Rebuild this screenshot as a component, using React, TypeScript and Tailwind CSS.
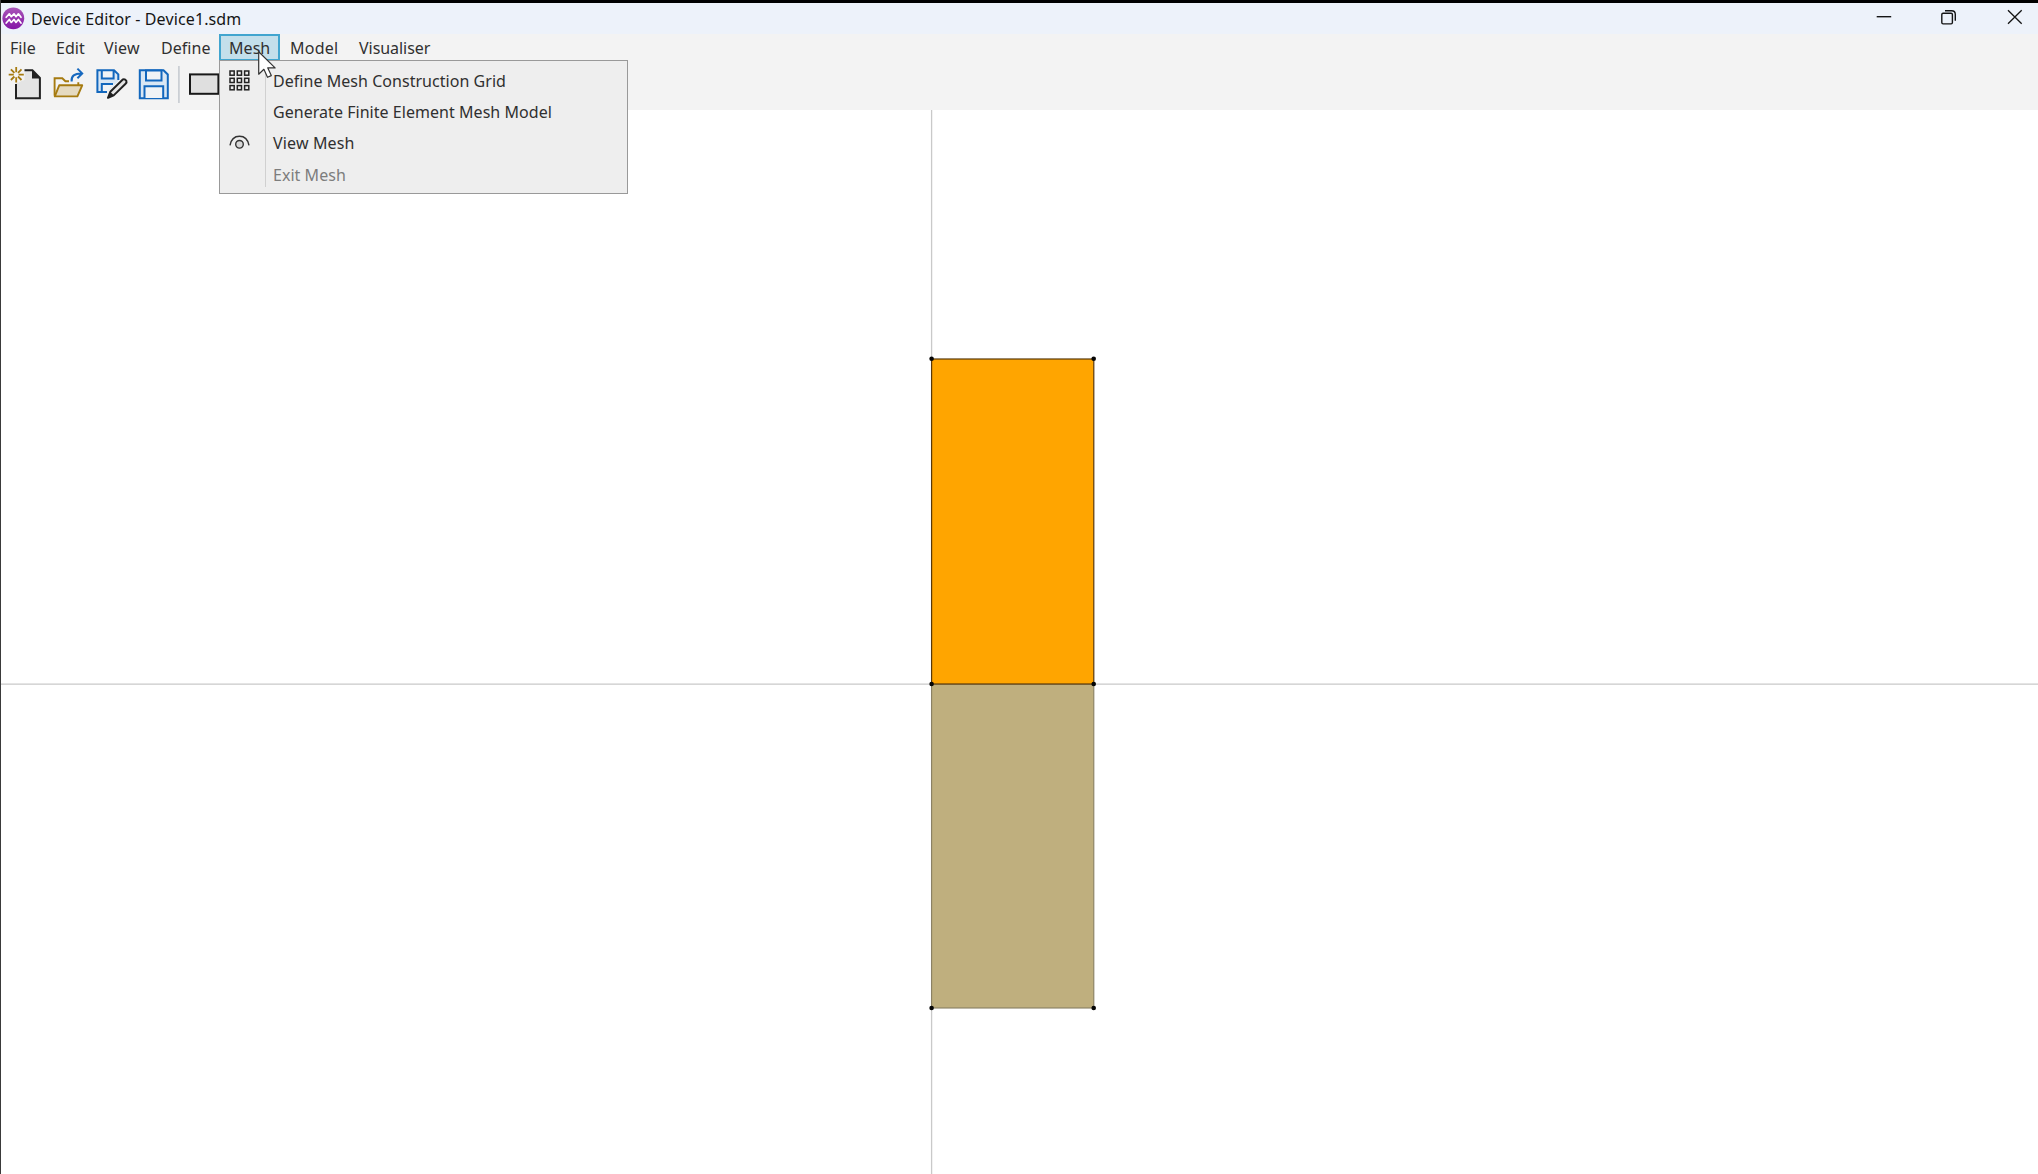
import React from "react";

const menus = [
  { label: "File", cls: "w-[45px] pl-[9px] tracking-[0.05px]" },
  { label: "Edit", cls: "w-[48px] pl-[10px] tracking-[0.05px]" },
  { label: "View", cls: "w-[57px] pl-[10px] tracking-[0.15px]" },
  { label: "Define", cls: "w-[68px] pl-[10px] tracking-[0.05px]" },
  { label: "Mesh", cls: "w-[61px] pl-[8px] tracking-[0.05px] border-2 border-[#41a5cf] bg-[#c3dfeb]" },
  { label: "Model", cls: "w-[68px] pl-[10px] tracking-[0.25px]" },
  { label: "Visualiser", cls: "w-[90px] pl-[11px] tracking-[-0.05px]" },
];

function AppLogo() {
  return (
    <svg width="23" height="23" viewBox="0 0 23 23" className="shrink-0">
      <defs>
        <linearGradient id="logo" x1="0" y1="0" x2="0" y2="1">
          <stop offset="0" stopColor="#a956b8" />
          <stop offset="1" stopColor="#8417a6" />
        </linearGradient>
      </defs>
      <circle cx="11.3" cy="11.3" r="10.9" fill="url(#logo)" />
      <path d="M4.2 10.3 7.3 6.8 9.3 9.7 12 6.8 14 9.7 16.4 6.8 19 10.3M4.2 16 7.3 12.5 9.3 15.4 12 12.5 14 15.4 16.4 12.5 19 16" fill="none" stroke="#fff" strokeWidth="1.7" strokeLinejoin="round" strokeLinecap="round" />
    </svg>
  );
}

function ToolbarIcons() {
  return (
    <svg width="218" height="48" viewBox="1 0 218 48" fill="none" className="shrink-0">
      {/* new document */}
      <path d="M16 21.5V37.3H39.9V17L32.4 9.2H24.5V19Z" fill="#e4e4e4" />
      <path d="M16 23V37.3H39.9V17L32.4 9.2H24.5" stroke="#222" strokeWidth="2" />
      <path d="M32 9V17.6H40Z" fill="#222" />
      <circle cx="16.2" cy="13.7" r="8.2" fill="#f3f3f3" />
      <path d="M16.2 6V11.2M16.2 16.2V21.4M8.7 13.7H13.8M18.6 13.7H23.8M10.9 8.4 14.4 11.9M21.5 8.4 18 11.9M10.9 19 14.4 15.5M21.5 19 18 15.5" stroke="#a67b10" strokeWidth="1.8" />
      {/* open */}
      <path d="M54.6 34.8V17.2H62.3L65.4 20.2H69M78.3 21.2V24" stroke="#a67b10" strokeWidth="1.9" />
      <path d="M54.8 35.4 59.2 24.3H82.2L77.4 35.4Z" fill="#e5dac0" stroke="#a67b10" strokeWidth="1.9" strokeLinejoin="round" />
      <path d="M71.6 20.5C71 15 74.5 12.3 81.6 12.4M77.4 7.6 82.2 12.4 77.4 17.2" stroke="#1769bf" strokeWidth="2" />
      {/* save as */}
      <path d="M97.4 9.2H114L118.3 13.4V20L107 31H97.4Z" fill="#d9e7f4" />
      <path d="M101.8 9.2H113.8V17.5H101.8ZM101.8 31V23H114L107 31Z" fill="#f0f3f6" />
      <path d="M107 31H97.4V9.2H114L118.3 13.4V19M101.8 9.2V17.5H113.6V9.2M101.8 31V23H113" stroke="#1267bd" strokeWidth="2" />
      <path d="M108 36.8 110.3 30.8 122.8 18.5Q125 17.8 126.3 19.7 127 21.5 125.6 22.7L113.7 34.4Z" fill="#e6e6e6" stroke="#222" strokeWidth="2" strokeLinejoin="round" />
      <path d="M107.6 37.2 110.2 30.8 113.9 34.3Z" fill="#222" />
      {/* save */}
      <path d="M139.8 9.2H163.5L167.8 13.5V37.2H139.8Z" fill="#d9e7f4" stroke="#1267bd" strokeWidth="2" />
      <path d="M146 9.5H161.5V19.4H146ZM144.5 37V25.3H163.2V37" fill="#f0f3f6" stroke="#1267bd" strokeWidth="2" />
      <path d="M178.9 5V42" stroke="#c3c8ce" strokeWidth="1.5" />
      {/* rectangle tool */}
      <rect x="190" y="13.4" width="28.4" height="19.4" fill="#dfdfdf" stroke="#181818" strokeWidth="2" />
    </svg>
  );
}

function WindowButtons() {
  return (
    <svg width="198" height="31" viewBox="0 0 198 31" fill="none" stroke="#151515" className="ml-auto shrink-0">
      <path d="M36.7 13.7H51.2" strokeWidth="1.4" />
      <rect x="101.8" y="10.3" width="10.6" height="10.6" rx="1.3" strokeWidth="1.4" />
      <path d="M105 7.7H111.6Q115.3 7.7 115.3 11.4V17.7" strokeWidth="1.4" />
      <path d="M168 7.2 181.7 20.8M181.7 7.2 168 20.8" strokeWidth="1.3" />
    </svg>
  );
}

function GridIcon() {
  return (
    <svg width="21" height="21" viewBox="0 0 21 21" fill="none" stroke="#222" strokeWidth="1.5">
      {[1, 8.3, 15.6].map((y) =>
        [1, 8.3, 15.6].map((x) => <rect key={`${x}-${y}`} x={x} y={y} width="4.2" height="4.2" />)
      )}
    </svg>
  );
}

function EyeIcon() {
  return (
    <svg width="21" height="21" viewBox="0 0 21 21" fill="none" stroke="#333" strokeWidth="1.4">
      <path d="M1 12.4C2 6.7 5.7 3.2 10.5 3.2S19 6.7 20 12.4" />
      <circle cx="10.5" cy="11.3" r="3.8" fill="#d8d8d8" />
    </svg>
  );
}

function Canvas() {
  return (
    <svg width="2037" height="1064" viewBox="1 110 2037 1064" className="block shrink-0">
      <path d="M931.6 110V1174M1 684.1H2038" stroke="#c9c9c9" strokeWidth="1.3" />
      <rect x="931.6" y="684" width="162.2" height="324" fill="#bfaf7e" stroke="#887f62" strokeWidth="1.1" />
      <rect x="931.6" y="359" width="162.2" height="325" fill="#ffa500" stroke="#59390a" strokeWidth="1.2" />
      {[358.8, 684, 1008].map((y) =>
        [931.6, 1093.7].map((x) => <circle key={`${x}-${y}`} cx={x} cy={y} r="2.3" fill="#050505" />)
      )}
    </svg>
  );
}

function MenuItem({ icon, label, cls }: { icon?: React.ReactNode; label: string; cls: string }) {
  return (
    <div className="flex h-[31.3px] items-center">
      <div className="flex w-[45px] shrink-0 items-center pl-[9px]">{icon}</div>
      <span className={`pl-[8px] leading-none whitespace-nowrap ${cls}`}>{label}</span>
    </div>
  );
}

export default function App() {
  return (
    <div className="relative flex h-[1174px] w-[2038px] flex-col overflow-hidden border-l border-[#3a3a3a] bg-white font-['Noto_Sans',sans-serif] text-[16px] text-[#303030]">
      <div className="h-[3px] shrink-0 bg-black" />
      <header className="flex h-[31px] shrink-0 items-start bg-[#edf2fa] pl-[1px]">
        <div className="pt-[4px]"><AppLogo /></div>
        <span className="pt-[4px] pl-[6px] leading-[24px] tracking-[0.12px] whitespace-nowrap text-[#151515]">Device Editor - Device1.sdm</span>
        <WindowButtons />
      </header>
      <nav className="flex h-[27px] shrink-0 bg-[#f3f3f3]">
        {menus.map((m) => (
          <div key={m.label} className={`flex shrink-0 items-center leading-none whitespace-nowrap ${m.cls}`}>{m.label}</div>
        ))}
      </nav>
      <div className="flex h-[49px] shrink-0 bg-[#f3f3f3]"><ToolbarIcons /></div>
      <Canvas />
      <div className="absolute top-[60px] left-[218px] h-[134px] w-[409px] border border-[#999999] bg-[#eeeeee] pt-[4px]">
        <div className="absolute top-[2px] left-[45px] h-[124px] w-px bg-[#d0d0d0]" />
        <MenuItem icon={<GridIcon />} label="Define Mesh Construction Grid" cls="tracking-[0.04px]" />
        <MenuItem label="Generate Finite Element Mesh Model" cls="tracking-[0.04px]" />
        <MenuItem icon={<EyeIcon />} label="View Mesh" cls="tracking-[0.15px]" />
        <MenuItem label="Exit Mesh" cls="tracking-[0.04px] text-[#7d7d7d]" />
      </div>
      <svg width="22" height="30" viewBox="0 0 22 30" className="absolute top-[50px] left-[256px]">
        <path d="M1.7 1.7V24.2L6.9 19.3 10.5 27.3 14.3 25.6 10.8 17.9H18.1Z" fill="#fff" stroke="#333" strokeWidth="1.2" strokeLinejoin="round" />
      </svg>
    </div>
  );
}
